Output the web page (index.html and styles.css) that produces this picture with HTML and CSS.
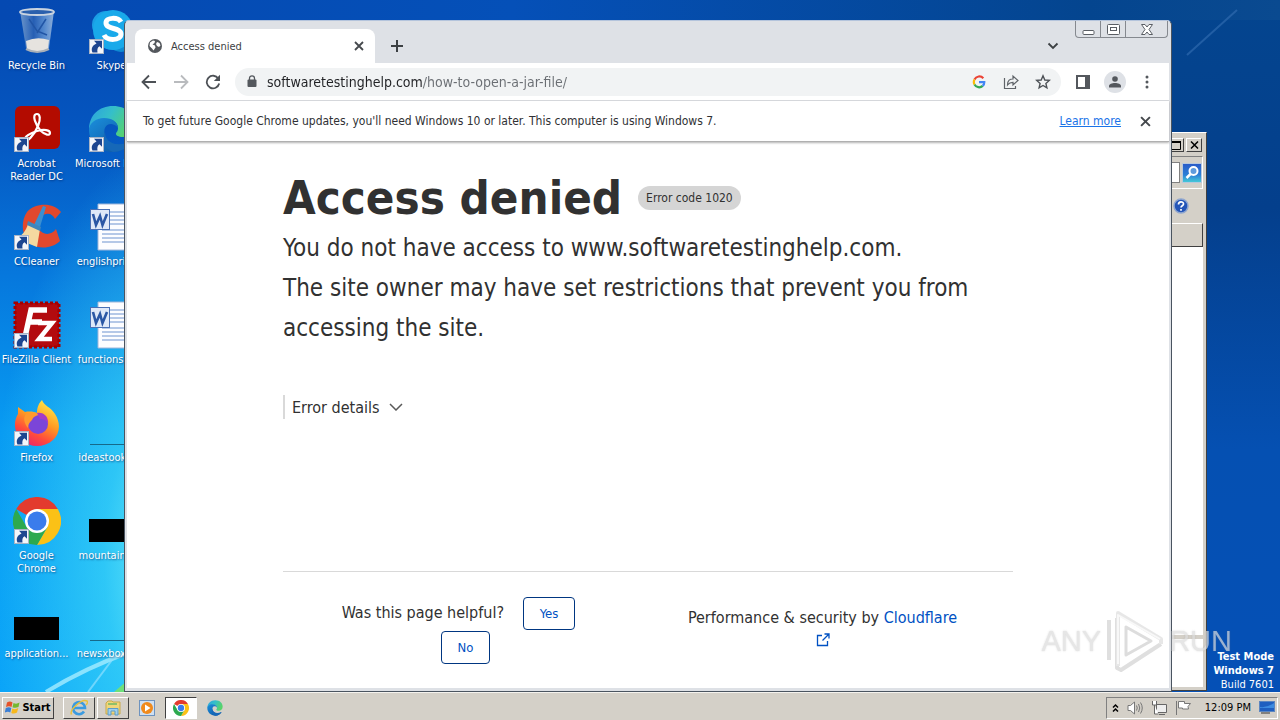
FILE: index.html
```html
<!DOCTYPE html>
<html lang="en">
<head>
    <meta charset="UTF-8">
    <meta name="viewport" content="width=device-width, initial-scale=1.0">
    <title>Access denied</title>
    <link rel="stylesheet" href="styles.css">
</head>
<body>

<!-- Shared icons -->
<svg class="sprite" width="0" height="0" aria-hidden="true">
    <defs>
        <linearGradient id="g-edge" x1="0" y1="0" x2="1" y2="0.4">
            <stop offset="0" stop-color="#2b9fe0"/>
            <stop offset="0.5" stop-color="#35bfc9"/>
            <stop offset="1" stop-color="#58d36a"/>
        </linearGradient>
        <linearGradient id="g-edge2" x1="0" y1="0" x2="1" y2="1">
            <stop offset="0" stop-color="#1b8fdc"/>
            <stop offset="1" stop-color="#0c4f9c"/>
        </linearGradient>
        <linearGradient id="g-fox" x1="0.8" y1="0" x2="0.3" y2="1">
            <stop offset="0" stop-color="#fff04a"/>
            <stop offset="0.45" stop-color="#ff9a22"/>
            <stop offset="0.75" stop-color="#ff4a3c"/>
            <stop offset="1" stop-color="#e8256c"/>
        </linearGradient>
        <linearGradient id="g-bin" x1="0" y1="0" x2="1" y2="0">
            <stop offset="0" stop-color="#7ea3cf"/>
            <stop offset="0.4" stop-color="#2c62b4"/>
            <stop offset="0.7" stop-color="#5f92d2"/>
            <stop offset="1" stop-color="#a5c0e0"/>
        </linearGradient>
    </defs>
    <symbol id="shortcut" viewBox="0 0 15 15">
        <rect x="0.5" y="0.5" width="14" height="14" fill="#f4f6fa" stroke="#a9b4c6"/>
        <path d="M5 1.800h8v8l-2.500-2.500C8.500 8.500 8 10.500 8.500 13.500H3.500C1.500 9 4 6 7.500 4.500z" fill="#1d4690"/>
    </symbol>
    <symbol id="chrome" viewBox="0 0 48 48">
        <path d="M24 24 3.200 12A24 24 0 0 1 44.800 12z" fill="#e33b2e"/>
        <path d="M24 12H44.800A24 24 0 0 1 24 48L34.400 30z" fill="#fbc116"/>
        <path d="M3.200 12 13.600 30 24 36l10.400-6L24 48A24 24 0 0 1 3.200 12z" fill="#2da94f"/>
        <circle cx="24" cy="24" r="12" fill="#fff"/>
        <circle cx="24" cy="24" r="9.500" fill="#3a7cec"/>
    </symbol>
    <symbol id="edge" viewBox="0 0 48 48">
        <path d="M1 25C1 10 11 1 25 1c14 0 22 9 22 19 0 8-6 12-12 12-5 0-7-2-7-3 0-2 2-2 2-6 0-5-5-9-12-9C9 14 2 20 1 25z" fill="url(#g-edge)"/>
        <path d="M1 25c0-7 7-12 15-12 8 0 14 4 14 10-2-3-5-4-7-4-6 0-8 6-6 12 3 8 14 12 27 5-4 7-11 11-19 11C11 47 1 37 1 25z" fill="url(#g-edge2)"/>
        <path d="M17 27c0 11 12 16 27 9-4 7-11 11-19 11-9-3-12-14-8-20z" fill="#1668b8"/>
    </symbol>
    <symbol id="word" viewBox="0 0 48 48">
        <path d="M10 1h34v46H10z" fill="#fdfdff" stroke="#9fb6da"/>
        <path d="M22 9h18M22 13h18M22 17h18M22 21h18M14 27h26M14 31h26M14 35h26M14 39h26" stroke="#6f93cf" stroke-width="1.200"/>
        <rect x="2.500" y="6.500" width="19" height="20" fill="#dfe8f8" stroke="#4a70b5"/>
        <path d="M5 11l3 11 4-9 2.500 9L19 11" fill="none" stroke="#2b57a5" stroke-width="2.600"/>
    </symbol>
    <symbol id="close" viewBox="0 0 10 10">
        <path d="M1 1l8 8M9 1l-8 8" fill="none" stroke="currentColor" stroke-width="1.800"/>
    </symbol>
</svg>

<div class="desktop">
    <svg class="wallpaper" width="160" height="692" viewBox="0 0 160 692" aria-hidden="true">
        <path d="M46 692Q85 668 130 652" fill="none" stroke="#a5ecff" stroke-width="4" opacity="0.800"/>
        <path d="M88 692L112 660" stroke="#8fe0ff" stroke-width="2" opacity="0.700"/>
        <path d="M114 692l14-12v12z" fill="#6fe07a"/>
    </svg>
    <svg class="wallpaper-right" width="110" height="60" viewBox="0 0 110 60" aria-hidden="true">
        <path d="M17 55L67 10" stroke="#3f78bb" stroke-width="2" opacity="0.500"/>
    </svg>

    <ul class="shortcuts">
        <li class="shortcut">
            <svg class="shortcut-icon" viewBox="0 0 48 48">
                <path d="M7 4h34l-5 37q-12 7-23 0z" fill="url(#g-bin)" opacity="0.850"/>
                <path d="M13 34q11-5 23-1l-1 9q-11 5-21 0z" fill="#e6e3df"/>
                <path d="M16 12l8 12 10 4M33 12l-9 14" stroke="#2155a5" stroke-width="1.500" fill="none"/>
                <ellipse cx="24" cy="5" rx="17" ry="3" fill="#2b60ad" stroke="#c9d3e0" stroke-width="1.800"/>
                <path d="M13 42q11 6 23 0" fill="none" stroke="#a9b0b8" stroke-width="2"/>
            </svg>
            <span class="shortcut-name">Recycle Bin</span>
        </li>
        <li class="shortcut">
            <svg class="shortcut-icon" viewBox="0 0 48 48">
                <circle cx="18" cy="18" r="14" fill="#1b9de4"/>
                <circle cx="33" cy="30" r="15" fill="#0f8ad2"/>
                <circle cx="25" cy="23" r="20" fill="#19a9ea"/>
                <path d="M33 15c-3-5-15-5-15 1 0 7 15 4 15 11 0 7-14 7-17 1" fill="none" stroke="#fff" stroke-width="5"/>
                <use href="#shortcut" x="1" y="32" width="15" height="15"/>
            </svg>
            <span class="shortcut-name">Skype</span>
        </li>
        <li class="shortcut">
            <svg class="shortcut-icon" viewBox="0 0 48 48">
                <rect x="2" y="1" width="45" height="43" rx="6" fill="#b30b00"/>
                <path d="M24 9c-6 0-1 12 4 17 4 4 9 5 9 2s-6-4-13-2-13 6-12 9 9-4 13-14c3-7 2-12-1-12z" fill="none" stroke="#fff" stroke-width="2.200"/>
                <use href="#shortcut" x="1" y="32" width="15" height="15"/>
            </svg>
            <span class="shortcut-name">Acrobat Reader DC</span>
        </li>
        <li class="shortcut">
            <svg class="shortcut-icon" viewBox="0 0 48 48">
                <use href="#edge" width="48" height="48"/>
                <use href="#shortcut" x="1" y="32" width="15" height="15"/>
            </svg>
            <span class="shortcut-name">Microsoft&nbsp;Edge</span>
        </li>
        <li class="shortcut">
            <svg class="shortcut-icon" viewBox="0 0 48 48">
                <path d="M48 9C40-1 22 0 14 9 7 19 9 35 18 41c9 6 22 4 29-3l-4-12c-5 7-14 6-17 0-3-6 0-14 7-15 4-1 7 1 9 5z" fill="#e2482d"/>
                <path d="M30 3l3 1-6 20-6-2z" fill="#3b8fd0"/>
                <path d="M15 21l12 5-3 18-20-8c5-4 9-8 11-15z" fill="#f5d9a0"/>
                <path d="M15 18l13 6-1 4-13-6z" fill="#3f86bd"/>
                <use href="#shortcut" x="1" y="32" width="15" height="15"/>
            </svg>
            <span class="shortcut-name">CCleaner</span>
        </li>
        <li class="shortcut">
            <svg class="shortcut-icon" viewBox="0 0 48 48"><use href="#word" width="48" height="48"/></svg>
            <span class="shortcut-name">englishprice...</span>
        </li>
        <li class="shortcut">
            <svg class="shortcut-icon" viewBox="0 0 48 48">
                <rect x="2" y="2" width="44" height="44" fill="#b30b0f" stroke="#a30000" stroke-width="3" stroke-dasharray="3 2"/>
                <path d="M12 36L18 9h16M15 21h14" fill="none" stroke="#fff" stroke-width="5.500"/>
                <path d="M25 22h14L26 38h13" fill="none" stroke="#fff" stroke-width="4.500"/>
                <use href="#shortcut" x="1" y="32" width="15" height="15"/>
            </svg>
            <span class="shortcut-name">FileZilla Client</span>
        </li>
        <li class="shortcut">
            <svg class="shortcut-icon" viewBox="0 0 48 48"><use href="#word" width="48" height="48"/></svg>
            <span class="shortcut-name">functionspa...</span>
        </li>
        <li class="shortcut">
            <svg class="shortcut-icon" viewBox="0 0 48 48">
                <path d="M29 1c2 6 9 7 13 14 6 9 5 20-2 26-9 8-23 8-31 0C1 34 0 23 5 15V8l7 5c5-1 10 0 12 1 0-6 2-10 5-13z" fill="url(#g-fox)"/>
                <circle cx="25" cy="25" r="10" fill="#7b45d8"/>
                <path d="M13 15c5-2 12-2 15 1-5 0-8 2-9 5-2 2-4 4-4 8-4-5-5-10-2-14z" fill="#ff9a2e"/>
                <path d="M24 14c7-1 12 4 11 12 0-4-4-6-8-6z" fill="#a33cc8"/>
                <use href="#shortcut" x="1" y="32" width="15" height="15"/>
            </svg>
            <span class="shortcut-name">Firefox</span>
        </li>
        <li class="shortcut">
            <svg class="shortcut-icon" viewBox="0 0 48 48"><path d="M2 45.500h46" stroke="#16698a"/></svg>
            <span class="shortcut-name">ideastookin...</span>
        </li>
        <li class="shortcut">
            <svg class="shortcut-icon" viewBox="0 0 48 48">
                <use href="#chrome" width="48" height="48"/>
                <use href="#shortcut" x="1" y="32" width="15" height="15"/>
            </svg>
            <span class="shortcut-name">Google Chrome</span>
        </li>
        <li class="shortcut">
            <svg class="shortcut-icon" viewBox="0 0 48 48"><rect x="1" y="22" width="47" height="23"/></svg>
            <span class="shortcut-name">mountaingr...</span>
        </li>
        <li class="shortcut">
            <svg class="shortcut-icon" viewBox="0 0 48 48"><rect x="1" y="22" width="45" height="23"/></svg>
            <span class="shortcut-name">application...</span>
        </li>
        <li class="shortcut">
            <svg class="shortcut-icon" viewBox="0 0 48 48"><path d="M2 45.500h46" stroke="#16698a"/></svg>
            <span class="shortcut-name">newsxboxes...</span>
        </li>
    </ul>

    <div class="build-info">
        <strong>Test Mode</strong>
        <strong>Windows 7</strong>
        <span>Build 7601</span>
    </div>

    <!-- Explorer window behind the browser -->
    <div class="explorer">
        <div class="explorer-title">
            <button class="classic-button" aria-label="Maximize"><svg width="10" height="9" viewBox="0 0 10 9"><path d="M.5 1h9v7.500h-9z" fill="none" stroke="#000"/><path d="M0 1h10" stroke="#000" stroke-width="2"/></svg></button>
            <button class="classic-button" aria-label="Close"><svg width="9" height="8"><path d="M1 .5l7 7M8 .5l-7 7" stroke="#000" stroke-width="1.500"/></svg></button>
        </div>
        <div class="explorer-search">
            <input class="search-box" type="text" aria-label="Search">
            <button class="search-button" aria-label="Go">
                <svg width="18" height="18" viewBox="0 0 18 18"><circle cx="10.500" cy="7" r="4" fill="#5f9bdc" stroke="#fff" stroke-width="2"/><path d="M7.500 10l-4 4" stroke="#fff" stroke-width="2.500"/></svg>
            </button>
        </div>
        <div class="explorer-tools">
            <svg width="16" height="16" viewBox="0 0 16 16"><circle cx="8" cy="8" r="7" fill="#2455b8" stroke="#8fa6cf" stroke-width="1.500"/><path d="M5.500 6.500c0-3.500 5-3.200 5-.6C10.500 7.800 8 7.600 8 9.600M8 11v1.800" fill="none" stroke="#fff" stroke-width="1.700"/></svg>
        </div>
        <div class="explorer-header"></div>
        <div class="explorer-list"></div>
        <div class="explorer-details"></div>
    </div>

    <!-- Browser window -->
    <div class="browser">
        <div class="tab-strip">
            <div class="tab">
                <svg width="16" height="16" viewBox="0 0 16 16"><circle cx="8" cy="8" r="7" fill="#54585d"/><path d="M3 4.500l3-2 2 .5-.500 2-2 1.500 2.500 1 .500 2-2 3-1.500-2L2.500 8zM10 4l2.500 1 1 2.500-1.500 1.500-2-1-1-2z" fill="#fff"/></svg>
                <span class="tab-title">Access denied</span>
                <button class="icon-button" aria-label="Close tab"><svg width="10" height="10"><use href="#close" width="10" height="10"/></svg></button>
            </div>
            <button class="icon-button new-tab" aria-label="New tab"><svg width="14" height="14" viewBox="0 0 14 14"><path d="M7 1v12M1 7h12" stroke="#3c4043" stroke-width="2"/></svg></button>
            <button class="icon-button tab-search" aria-label="Search tabs"><svg width="12" height="8" viewBox="0 0 12 8"><path d="M1.500 1.500L6 6l4.500-4.500" fill="none" stroke="#3c4043" stroke-width="1.800"/></svg></button>
            <div class="caption-buttons">
                <button aria-label="Minimize"><svg width="13" height="13" viewBox="0 0 13 13"><rect x="1" y="7.500" width="11" height="4" rx="1" fill="#fff" stroke="#5a5e64"/></svg></button>
                <button aria-label="Restore"><svg width="13" height="11" viewBox="0 0 13 11"><rect x="0.500" y="0.500" width="12" height="10" rx="1" fill="#fff" stroke="#5a5e64"/><rect x="3.500" y="3.500" width="6" height="3" fill="#fff" stroke="#5a5e64"/></svg></button>
                <button class="caption-close" aria-label="Close"><svg width="12" height="11" viewBox="0 0 12 11"><path d="M.5.500h3.500l2 2.500 2-2.500h3.500L8 5.500l3.500 5H8L6 8l-2 2.500H.5L4 5.500z" fill="#fff" stroke="#5a5e64"/></svg></button>
            </div>
        </div>

        <div class="toolbar">
            <button class="icon-button" aria-label="Back"><svg width="16" height="16" viewBox="0 0 16 16"><path d="M15 8H2M8 1.500L1.500 8 8 14.500" fill="none" stroke="#4d5156" stroke-width="1.800"/></svg></button>
            <button class="icon-button" aria-label="Forward"><svg width="16" height="16" viewBox="0 0 16 16"><path d="M1 8h13M8 1.500L14.500 8 8 14.500" fill="none" stroke="#b9bbbe" stroke-width="1.800"/></svg></button>
            <button class="icon-button" aria-label="Reload"><svg width="16" height="16" viewBox="0 0 16 16"><path d="M13.300 4.500A6.300 6.300 0 1 0 14.200 9.500" fill="none" stroke="#4d5156" stroke-width="1.800"/><path d="M15 .8v6.200H8.800z" fill="#4d5156"/></svg></button>
            <div class="address-bar">
                <svg width="10" height="13" viewBox="0 0 10 13"><rect x="0.500" y="4.500" width="9" height="7.500" rx="1" fill="#54585d"/><path d="M2.500 5V3.300a2.500 2.500 0 0 1 5 0V5" fill="none" stroke="#54585d" stroke-width="1.300"/></svg>
                <input class="address" type="text" aria-label="Address" value="softwaretestinghelp.com/how-to-open-a-jar-file/">
                <button class="icon-button" aria-label="Google"><svg width="14" height="14" viewBox="0 0 14 14" fill="none" stroke-width="2.200"><path d="M11.300 3.300A5.300 5.300 0 0 0 2.500 4.500" stroke="#ea4335"/><path d="M2.500 4.500a5.300 5.300 0 0 0 0 5" stroke="#fbbc05"/><path d="M2.500 9.500a5.300 5.300 0 0 0 8.200 1.400" stroke="#34a853"/><path d="M10.700 10.900A5 5 0 0 0 12.300 7.200H7" stroke="#4285f4"/></svg></button>
                <button class="icon-button" aria-label="Share"><svg width="16" height="16" viewBox="0 0 16 16" fill="none" stroke="#5f6368" stroke-width="1.200"><path d="M1.500 4v10.500h11V12"/><path d="M4.500 11C4.500 6.500 7 5 10 5V2l5 4.500-5 4.500V8.300c-2.500 0-4 .7-5.500 2.700z"/></svg></button>
                <button class="icon-button" aria-label="Bookmark"><svg width="16" height="16" viewBox="0 0 16 16"><path d="M8 1.800l1.800 4.200 4.500.4-3.400 3 1 4.400L8 11.500l-3.900 2.300 1-4.400-3.400-3 4.500-.4z" fill="none" stroke="#4d5156" stroke-width="1.400"/></svg></button>
            </div>
            <button class="icon-button" aria-label="Side panel"><svg width="14" height="14" viewBox="0 0 14 14"><path d="M1 1h12v12H1z" fill="none" stroke="#54585d" stroke-width="2"/><path d="M9 1h4v12H9z" fill="#54585d"/></svg></button>
            <button class="icon-button profile" aria-label="Profile"><svg width="12" height="12" viewBox="0 0 12 12" fill="#54585d"><circle cx="6" cy="3" r="2.800"/><path d="M0 11.500V10c0-2 3-3 6-3s6 1 6 3v1.500z"/></svg></button>
            <button class="icon-button" aria-label="Menu"><svg width="4" height="14" viewBox="0 0 4 14" fill="#54585d"><circle cx="2" cy="2" r="1.500"/><circle cx="2" cy="7" r="1.500"/><circle cx="2" cy="12" r="1.500"/></svg></button>
        </div>

        <div class="infobar">
            <p>To get future Google Chrome updates, you'll need Windows 10 or later. This computer is using Windows 7.</p>
            <a href="#">Learn more</a>
            <button class="icon-button" aria-label="Dismiss"><svg width="11" height="11"><use href="#close" width="11" height="11"/></svg></button>
        </div>

        <main class="page">
            <div class="page-heading">
                <h1>Access denied</h1>
                <span class="error-code">Error code 1020</span>
            </div>
            <p class="lead">You do not have access to www.softwaretestinghelp.com.</p>
            <p class="lead">The site owner may have set restrictions that prevent you from accessing the site.</p>
            <button class="error-details">
                Error details
                <svg width="14" height="8" viewBox="0 0 14 8"><path d="M1 1l6 6 6-6" fill="none" stroke="#595959" stroke-width="1.500"/></svg>
            </button>
            <footer class="page-footer">
                <div class="feedback">
                    Was this page helpful?
                    <button class="feedback-button">Yes</button>
                    <button class="feedback-button">No</button>
                </div>
                <div class="vendor">
                    Performance &amp; security by
                    <a href="#">Cloudflare
                        <svg width="14" height="14" viewBox="0 0 14 14" fill="none" stroke="#0051c3" stroke-width="1.300"><path d="M6 2.500H1.500v10h10V8"/><path d="M8.500 1H13v4.500M13 1L6.500 7.500"/></svg>
                    </a>
                </div>
            </footer>
        </main>
    </div>

    <div class="watermark">
        <span>ANY</span>
        <svg width="58" height="62" viewBox="0 0 58 62" fill="none" stroke-linejoin="round">
            <path d="M3 10v40M11 8v50l4 2 40-26" stroke="#d2d2d2" stroke-width="4"/>
            <path d="M12 56V3l43 26v5" stroke="#dedede" stroke-width="4"/>
            <path d="M20 17v28l25-14z" stroke="#cfcfcf" stroke-width="3"/>
            <path d="M12 54V5l42 24" stroke="#f6f6f6" stroke-width="2"/>
        </svg>
        <span>RUN</span>
    </div>
</div>

<div class="taskbar">
    <button class="start-button">
        <svg width="16" height="16" viewBox="0 0 16 16"><path d="M2 2.500q3-2 5.500 0L6.500 7Q4 5.500 1 7z" fill="#e5532a"/><path d="M8.500 3q3 1.500 6-.5L13.500 7q-3 1.500-6 .3z" fill="#76b82e"/><path d="M.8 8Q4 6.500 6.300 8l-1 4.500Q3 11-.2 12.500z" fill="#3a7fd5"/><path d="M7.300 8.500q3 1.500 6-.5L12 12.500q-3 1.800-5.700.4z" fill="#f6b81c"/></svg>
        Start
    </button>
    <button class="task-button raised" aria-label="Internet Explorer">
        <svg width="18" height="18" viewBox="0 0 18 18"><path d="M14 12.500A6 6 0 1 1 15 9H4" fill="none" stroke="#3b9be0" stroke-width="2.600"/><path d="M1.500 15.500C-1 11 12-1 17 2c1 1 0 3-1 4" fill="none" stroke="#e9c13c" stroke-width="1.500"/></svg>
    </button>
    <button class="task-button raised" aria-label="Explorer">
        <svg width="18" height="18" viewBox="0 0 18 18"><path d="M2 4l2-2h4l1 1h7v12H2z" fill="#f0d67a" stroke="#c9a94a"/><path d="M4 5h9" stroke="#8fc06a" stroke-width="2"/><path d="M4 9.500h10v6.500h-3v-4H7v4H4z" fill="#9fd0ee" stroke="#5c9cc8"/></svg>
    </button>
    <button class="task-button" aria-label="Media Player">
        <svg width="16" height="16" viewBox="0 0 16 16"><rect x="0.500" y="0.500" width="15" height="15" fill="#cfe0f2" stroke="#6d93bf"/><circle cx="8" cy="8" r="6" fill="#f08a1c"/><path d="M6 4.500L11.500 8 6 11.500z" fill="#fff"/></svg>
    </button>
    <button class="task-button pressed" aria-label="Google Chrome">
        <svg width="16" height="16"><use href="#chrome" width="16" height="16"/></svg>
    </button>
    <button class="task-button" aria-label="Microsoft Edge">
        <svg width="16" height="16"><use href="#edge" width="16" height="16"/></svg>
    </button>
    <div class="tray">
        <svg width="7" height="10" viewBox="0 0 7 10"><path d="M1 4.500L3.500 2 6 4.500M1 8.500L3.500 6 6 8.500" fill="none" stroke="#000" stroke-width="1.500"/></svg>
        <svg width="16" height="14" viewBox="0 0 16 14" fill="#fff" stroke="#777"><path d="M1 4.500h2.500L7.500 1v12L3.500 9.500H1z"/><path d="M9.500 4.500q1.500 2.500 0 5M11.500 3q2.500 4 0 8M13.500 1.500q3.500 5.500 0 11" fill="none"/></svg>
        <svg width="16" height="16" viewBox="0 0 16 16" fill="#eee" stroke="#666"><path d="M5.500 4.500h10v8h-10zM8 14.500h6"/><path d="M1.500 1v4h4V1M3.500 5v9h4" fill="#fff"/></svg>
        <svg width="16" height="15" viewBox="0 0 16 15" fill="#fff" stroke="#777"><path d="M1.500 1v14M3.500 1.500h6v2h6l-2.500 3 .5 2.500h-6V8h-4z"/></svg>
        <span class="clock">12:09 PM</span>
        <svg width="16" height="13" viewBox="0 0 16 13"><rect x="0.500" y="0.500" width="15" height="10" fill="#1f5fc0" stroke="#5c86c0"/><path d="M1 6q7 1 14-4v5H1z" fill="#3d8be0"/><path d="M2 12h9" stroke="#333"/></svg>
    </div>
</div>

</body>
</html>
```
FILE: styles.css
```css
* {
    box-sizing: border-box;
}
body {
    margin: 0;
    height: 100vh;
    display: flex;
    flex-direction: column;
    overflow: hidden;
    font-family: "DejaVu Sans Condensed", "DejaVu Sans", sans-serif;
    font-size: 11px;
    color: #000;
}
h1, p, ul {
    margin: 0;
    padding: 0;
}
svg {
    display: block;
    flex: none;
}
button, input {
    font-family: inherit;
    font-size: inherit;
    margin: 0;
    padding: 0;
    border: 0;
    background: none;
}
.sprite {
    position: absolute;
}

/* Desktop */
.desktop {
    position: relative;
    flex: 1;
    min-height: 0;
    overflow: hidden;
    background:
        linear-gradient(to right, #0549b2 0, #0550b8 40%, #04458f 85%, #0a4a90 100%) 0 0 / 100% 20px no-repeat,
        radial-gradient(ellipse 190px 420px at 180px 560px, rgba(130, 250, 250, 0.9), rgba(70, 225, 248, 0.6) 40%, rgba(0, 160, 250, 0)) 0 0 / 50% 100% no-repeat,
        linear-gradient(to bottom, #0549b0 0, #0555bf 18%, #0678dd 40%, #089bf2 62%, #0aa4f8 100%) 0 0 / 50% 100% no-repeat,
        linear-gradient(to bottom, #04458f 0, #043f8c 30%, #0550b2 65%, #0550b6 100%);
}
.wallpaper {
    position: absolute;
    left: 0;
    bottom: 0;
}
.wallpaper-right {
    position: absolute;
    right: 0;
    top: 0;
}
.shortcuts {
    position: absolute;
    left: 0;
    top: 7px;
    display: grid;
    grid-template-columns: 73px 73px;
    grid-auto-rows: 98px;
    column-gap: 2px;
    list-style: none;
    color: #fff;
}
.shortcut {
    display: flex;
    flex-direction: column;
    align-items: center;
    gap: 4px;
}
.shortcut-icon {
    width: 48px;
    height: 48px;
}
.shortcut-name {
    line-height: 13px;
    text-align: center;
    text-shadow: 1px 1px 2px rgba(0, 30, 90, 0.6);
}
.build-info {
    position: absolute;
    right: 6px;
    bottom: 0;
    display: flex;
    flex-direction: column;
    text-align: right;
    line-height: 14px;
    color: #fff;
}

/* Explorer window */
.explorer {
    position: absolute;
    left: 400px;
    right: 73px;
    top: 132px;
    bottom: 1px;
    display: flex;
    flex-direction: column;
    padding: 3px;
    background: #d4d0c8;
    border: 1px solid #fff;
    border-right-color: #404040;
    border-bottom-color: #404040;
}
.explorer-title {
    display: flex;
    justify-content: flex-end;
    gap: 2px;
    height: 20px;
    padding-top: 2px;
    padding-right: 1px;
}
.classic-button {
    display: flex;
    align-items: center;
    justify-content: center;
    width: 16px;
    height: 14px;
    background: #d4d0c8;
    border: 1px solid #fff;
    border-right-color: #404040;
    border-bottom-color: #404040;
}
.explorer-search {
    display: flex;
    align-items: center;
    justify-content: flex-end;
    gap: 2px;
    height: 33px;
    border-top: 1px solid #808080;
    border-bottom: 1px solid #fff;
    border-right: 1px solid #fff;
}
.search-box {
    width: 160px;
    height: 21px;
    background: #fff;
    border: 1px solid #808080;
}
.search-button {
    display: flex;
    align-items: center;
    justify-content: center;
    width: 20px;
    height: 20px;
    background: linear-gradient(#2a5cc8, #2c7fd6 60%, #45c8d8);
    border: 1px solid #b8c8dc;
}
.explorer-tools {
    display: flex;
    align-items: center;
    justify-content: flex-end;
    height: 34px;
    padding-right: 14px;
}
.explorer-header {
    height: 24px;
    border: 1px solid #fff;
    border-right-color: #404040;
    border-bottom-color: #404040;
}
.explorer-list {
    flex: 1;
    background: #fff;
    border-bottom: 4px solid #d4d0c8;
}
.explorer-details {
    height: 48px;
    background: #fff;
}

/* Browser window */
.browser {
    position: absolute;
    left: 124px;
    right: 108px;
    top: 20px;
    bottom: 0;
    display: flex;
    flex-direction: column;
    padding: 0 2px 3px;
    background: #dee1e6;
    border: 1px solid #4a5460;
    border-top-color: #b4c4dc;
    border-radius: 5px 5px 0 0;
}
.icon-button {
    display: flex;
    align-items: center;
    justify-content: center;
    width: 16px;
    height: 24px;
    color: #45494d;
}
.tab-strip {
    display: flex;
    align-items: flex-start;
    height: 42px;
    padding-left: 8px;
}
.tab {
    display: flex;
    align-items: center;
    gap: 8px;
    width: 240px;
    height: 34px;
    margin-top: 8px;
    padding: 0 8px 0 12px;
    background: #fff;
    border-radius: 8px 8px 0 0;
}
.tab-title {
    flex: 1;
    color: #3c4043;
}
.new-tab {
    margin: 13px auto 0 14px;
}
.tab-search {
    margin: 13px 14px 0 0;
}
.caption-buttons {
    display: flex;
    height: 17px;
    margin-right: 1px;
    border: 1px solid #85898f;
    border-top: 0;
    border-radius: 0 0 4px 4px;
}
.caption-buttons button {
    display: flex;
    align-items: center;
    justify-content: center;
    width: 25px;
    border-right: 1px solid #85898f;
}
.caption-buttons .caption-close {
    width: 41px;
    border-right: 0;
}
.toolbar {
    display: flex;
    align-items: center;
    gap: 16px;
    height: 38px;
    padding: 0 14px;
    background: #fff;
    border-bottom: 1px solid #dadce0;
}
.address-bar {
    display: flex;
    flex: 1;
    align-items: center;
    gap: 16px;
    height: 28px;
    padding: 0 10px 0 12px;
    margin: 0 -2px;
    background: #f1f3f4;
    border-radius: 14px;
}
.address {
    flex: 1;
    min-width: 0;
    margin-left: -6px;
    font-size: 14px;
    color: #202124;
    background: linear-gradient(to right, #202124 155px, #6a6e73 155px);
    -webkit-background-clip: text;
    background-clip: text;
    -webkit-text-fill-color: transparent;
}
.profile {
    width: 22px;
    height: 22px;
    margin: 0 -3px;
    background: #dee1e6;
    border-radius: 50%;
}
.infobar {
    position: relative;
    display: flex;
    align-items: center;
    gap: 16px;
    height: 41px;
    padding: 0 16px;
    font-size: 12px;
    color: #303134;
    background: #fff;
    border-bottom: 1px solid #b0b0b0;
    box-shadow: 0 1px 2px rgba(0, 0, 0, 0.3);
}
.infobar p {
    flex: 1;
}
.infobar a {
    color: #1a73e8;
}

/* Error page */
.page {
    display: flex;
    flex: 1;
    flex-direction: column;
    min-height: 0;
    padding: 26px 156px 0;
    font-size: 16px;
    line-height: 24px;
    color: #313131;
    background: #fff;
}
.page-heading {
    display: flex;
    align-items: center;
    gap: 16px;
}
h1 {
    font-size: 47px;
    line-height: 60px;
    font-weight: bold;
}
.error-code {
    padding: 0 8px;
    font-size: 12px;
    background: #d5d5d5;
    border-radius: 12px;
}
.lead {
    font-size: 24px;
    line-height: 40px;
}
.error-details {
    display: flex;
    align-items: center;
    gap: 9px;
    align-self: flex-start;
    height: 24px;
    margin-top: 47px;
    padding-left: 7px;
    color: #313131;
    border-left: 2px solid #d9d9d9;
}
.page-footer {
    display: grid;
    grid-template-columns: 1fr 1fr;
    margin-top: 152px;
    padding-top: 24px;
    text-align: center;
    border-top: 1px solid #d9d9d9;
}
.feedback {
    padding: 0 32px;
    line-height: 34px;
}
.feedback-button {
    height: 33px;
    margin: 0 14px;
    padding: 0 16px;
    font-size: 13px;
    color: #0051c3;
    border: 1px solid #003681;
    border-radius: 4px;
}
.vendor {
    padding: 10px 48px 0 32px;
}
.vendor a {
    color: #0051c3;
    text-decoration: none;
}
.vendor svg {
    display: inline-block;
}

/* Recording watermark */
.watermark {
    position: absolute;
    right: 48px;
    bottom: 20px;
    display: flex;
    align-items: center;
    gap: 5px;
    font-family: "Liberation Sans", sans-serif;
    font-size: 29px;
    line-height: 29px;
    color: #dcdcdc;
    text-shadow: 0 0 2px rgba(120, 120, 120, 0.4);
    opacity: 0.7;
}

/* Taskbar */
.taskbar {
    display: flex;
    align-items: center;
    gap: 2px;
    height: 28px;
    padding: 2px 2px 0;
    background: #d4d0c8;
    border-top: 1px solid #f4f2ee;
}
.start-button {
    display: flex;
    align-items: center;
    justify-content: center;
    gap: 1px;
    width: 52px;
    height: 22px;
    margin-right: 7px;
    font-weight: bold;
    border: 1px solid #fff;
    border-right-color: #404040;
    border-bottom-color: #404040;
}
.task-button {
    display: flex;
    align-items: center;
    justify-content: center;
    width: 32px;
    height: 22px;
    border: 1px solid transparent;
}
.raised {
    border-color: #fff #404040 #404040 #fff;
}
.pressed {
    background: #fff;
    border-color: #404040 #fff #fff #404040;
}
.tray {
    display: flex;
    align-items: center;
    gap: 8px;
    height: 22px;
    margin-left: auto;
    padding: 0 2px 0 5px;
    border: 1px solid #808080;
    border-right-color: #fff;
    border-bottom-color: #fff;
}
.clock {
    margin-left: 6px;
}
```
